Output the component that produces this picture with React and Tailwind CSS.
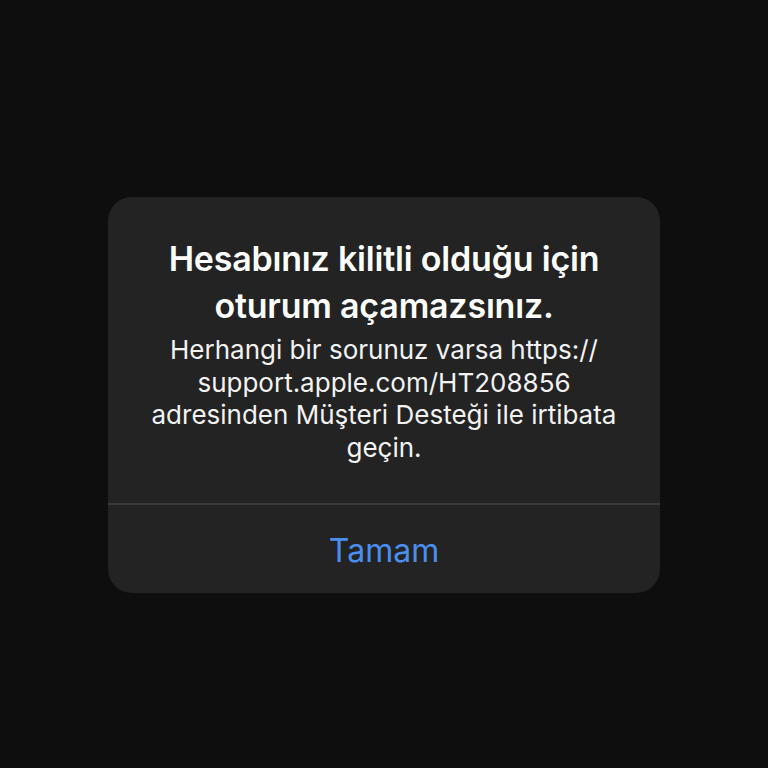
export default function App() {
  return (
    <main
      className="w-[768px] h-[768px] bg-[#0e0e0e] flex items-start justify-center pt-[197px]"
      style={{ fontFamily: 'Inter, "Noto Sans", sans-serif' }}
    >
      <div className="w-[552px] h-[396px] bg-[#232323] rounded-[24px] flex flex-col overflow-hidden">
        <div className="flex-1 flex flex-col items-center pt-[38px] px-[20px] text-center">
          <h1 className="text-white font-semibold text-[34px] leading-[47px] tracking-[-0.2px]">
            Hesabınız kilitli olduğu için
            <br />
            oturum açamazsınız.
          </h1>
          <p className="mt-[5px] text-[#f2f2f2] text-[26px] leading-[32.5px]">
            Herhangi bir sorunuz varsa https://
            <br />
            support.apple.com/HT208856
            <br />
            adresinden Müşteri Desteği ile irtibata
            <br />
            geçin.
          </p>
        </div>
        <div className="h-[2px] bg-[#3a3a3a]" />
        <button className="h-[88px] w-full flex items-center justify-center pt-[4px] text-[#4a8fef] text-[32px]">
          Tamam
        </button>
      </div>
    </main>
  );
}
